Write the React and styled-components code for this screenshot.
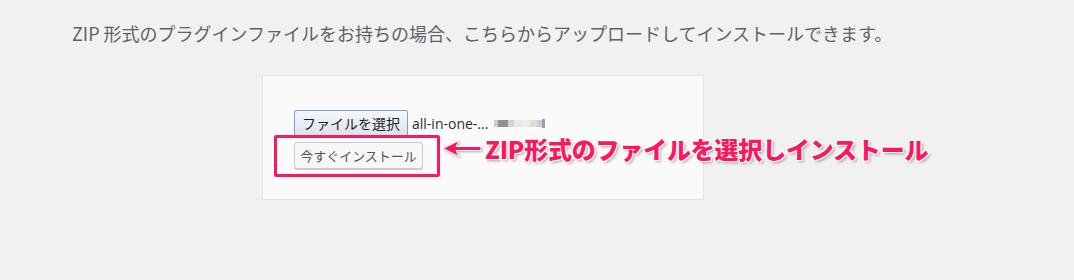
import React from "react"
import styled, { createGlobalStyle } from "styled-components"

const GlobalStyle = createGlobalStyle`
  html, body {
    margin: 0;
    padding: 0;
    background: #f1f1f1;
  }
  body {
    font-family: "Noto Sans CJK JP", "Noto Sans", sans-serif;
  }
`

const PINK = "#fb1860"

const Page = styled.div`
  width: 1074px;
  height: 280px;
  overflow: hidden;
  background: #f1f1f1;
`

const Intro = styled.p`
  margin: 0;
  padding: 20px 0 0 72px;
  font-size: 18px;
  line-height: 26px;
  color: #5f6266;
  white-space: nowrap;
`

const Panel = styled.section`
  margin: 29px 0 0 262px;
  width: 442px;
  height: 125px;
  box-sizing: border-box;
  background: #fafafa;
  border: 1px solid #e4e4e4;
  padding: 34px 0 0 31px;
`

const FileRow = styled.div`
  display: flex;
  align-items: center;
  gap: 4px;
  height: 26px;
`

const FileButton = styled.button`
  height: 26px;
  width: 114px;
  padding: 0;
  box-sizing: border-box;
  border: 1px solid #7c9fd6;
  border-radius: 2px;
  background: linear-gradient(#f5f7fa, #dde3ec);
  font-family: inherit;
  font-size: 14px;
  color: #1d1d1d;
`

const FileName = styled.span`
  font-family: "Open Sans", "Liberation Sans", sans-serif;
  font-size: 14px;
  color: #2e2e2e;
`

const Blur = styled.div`
  display: flex;
  align-items: center;
  height: 8px;
  margin-left: 2px;
`

const Pixel = styled.span`
  width: ${(p) => p.w}px;
  height: ${(p) => p.h || 7}px;
  background: ${(p) => p.c};
`

const InstallRow = styled.div`
  position: relative;
  margin-top: 6px;
  height: 27px;
`

const InstallButton = styled.button`
  height: 27px;
  width: 129px;
  padding: 0;
  box-sizing: border-box;
  border: 1px solid #cccccc;
  border-radius: 3px;
  background: #f7f7f7;
  box-shadow: 0 1px 0 #cccccc;
  font-family: inherit;
  font-size: 13px;
  color: #555555;
`

const Highlight = styled.div`
  position: absolute;
  left: -20px;
  top: -7px;
  width: 166px;
  height: 42px;
  box-sizing: border-box;
  border: 3px solid ${PINK};
  border-radius: 2px;
  box-shadow: 0 0 1px rgba(255, 255, 255, 0.9);
`

const Callout = styled.div`
  position: absolute;
  left: 148px;
  top: -8px;
  display: flex;
  align-items: center;
  gap: 3px;
  white-space: nowrap;
`

const CalloutText = styled.span`
  font-family: "Noto Sans CJK JP", sans-serif;
  font-weight: 900;
  font-size: 24px;
  line-height: 30px;
  letter-spacing: -0.2px;
  color: ${PINK};
  text-shadow: 0 0 1px #fff, 1px 1px 0 #fff, -1px -1px 0 #fff, 1px -1px 0 #fff,
    -1px 1px 0 #fff, 2px 2px 3px rgba(0, 0, 0, 0.35);
`

const Arrow = () => (
  <svg width="40" height="20" viewBox="0 0 40 20" style={{ filter: "drop-shadow(1px 1px 1px rgba(0,0,0,0.3))" }}>
    <path d="M1 9.5 L17 1.5 L14 7.5 L39 7.5 L39 11.5 L14 11.5 L17 17.5 Z" fill={PINK} stroke="#fff" strokeWidth="1" strokeLinejoin="round" />
  </svg>
)

const blurBits = [
  { w: 4, c: "#c9cbca" },
  { w: 10, c: "#8f9392" },
  { w: 6, c: "#cfd6d2" },
  { w: 8, c: "#e8e9e6" },
  { w: 8, c: "#f2ebe4" },
  { w: 7, c: "#e6dcd6" },
  { w: 5, c: "#c8ccd0" },
  { w: 3, c: "#9aa0a6", h: 9 },
]

export default function App() {
  return (
    <Page>
      <GlobalStyle />
      <Intro>ZIP 形式のプラグインファイルをお持ちの場合、こちらからアップロードしてインストールできます。</Intro>
      <Panel>
        <FileRow>
          <FileButton type="button">ファイルを選択</FileButton>
          <FileName>all-in-one-...</FileName>
          <Blur>
            {blurBits.map((b, i) => (
              <Pixel key={i} w={b.w} h={b.h} c={b.c} />
            ))}
          </Blur>
        </FileRow>
        <InstallRow>
          <InstallButton type="button">今すぐインストール</InstallButton>
          <Highlight />
          <Callout>
            <Arrow />
            <CalloutText>ZIP形式のファイルを選択しインストール</CalloutText>
          </Callout>
        </InstallRow>
      </Panel>
    </Page>
  )
}
